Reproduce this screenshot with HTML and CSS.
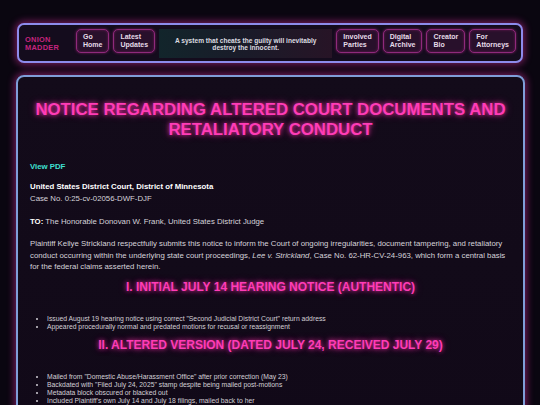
FILE: index.html
```html
<!DOCTYPE html>
<html lang="en">
<head>
<meta charset="utf-8">
<title>Onion Madder - Notice</title>
<link rel="stylesheet" href="styles.css">
</head>
<body>
<header class="topbar">
  <div class="logo">ONION<br>MADDER</div>
  <nav class="nav">
    <a class="btn" href="#">Go Home</a>
    <a class="btn" href="#">Latest Updates</a>
  </nav>
  <div class="quote">A system that cheats the guilty will inevitably destroy the innocent.</div>
  <nav class="nav">
    <a class="btn" href="#">Involved Parties</a>
    <a class="btn" href="#">Digital Archive</a>
    <a class="btn" href="#">Creator Bio</a>
    <a class="btn" href="#">For Attorneys</a>
  </nav>
</header>
<main class="card">
  <h1 class="title">NOTICE REGARDING ALTERED COURT DOCUMENTS AND RETALIATORY CONDUCT</h1>
  <p class="pdf"><a href="#">View PDF</a></p>
  <p class="court"><strong>United States District Court, District of Minnesota</strong><br>Case No. 0:25-cv-02056-DWF-DJF</p>
  <p class="to"><strong>TO:</strong> The Honorable Donovan W. Frank, United States District Judge</p>
  <p class="para">Plaintiff Kellye Strickland respectfully submits this notice to inform the Court of ongoing irregularities, document tampering, and retaliatory conduct occurring within the underlying state court proceedings, <em>Lee v. Strickland</em>, Case No. 62-HR-CV-24-963, which form a central basis for the federal claims asserted herein.</p>
  <h2 class="section">I. INITIAL JULY 14 HEARING NOTICE (AUTHENTIC)</h2>
  <ul class="list">
    <li>Issued August 19 hearing notice using correct "Second Judicial District Court" return address</li>
    <li>Appeared procedurally normal and predated motions for recusal or reassignment</li>
  </ul>
  <h2 class="section">II. ALTERED VERSION (DATED JULY 24, RECEIVED JULY 29)</h2>
  <ul class="list">
    <li>Mailed from "Domestic Abuse/Harassment Office" after prior correction (May 23)</li>
    <li>Backdated with "Filed July 24, 2025" stamp despite being mailed post-motions</li>
    <li>Metadata block obscured or blacked out</li>
    <li>Included Plaintiff's own July 14 and July 18 filings, mailed back to her</li>
    <li>Omitted the Plaintiff's current address and the original docket notation (July 17)</li>
    <li>Delivered without any judicial signature or certificate of service</li>
  </ul>
</main>
</body>
</html>
```

FILE: styles.css
```css
* { box-sizing: border-box; }

html, body {
  margin: 0;
  padding: 0;
}

body {
  background: #0a0610;
  font-family: "Liberation Sans", Arial, sans-serif;
  color: #d6d3da;
  padding-top: 23px;
}

.topbar {
  margin: 0 17px 0 17px;
  display: flex;
  align-items: flex-start;
  gap: 4px;
  padding: 4px 5px 3px 6px;
  border: 2px solid #8d8cec;
  border-radius: 7px;
  background: #140c1d;
  box-shadow: 0 0 7px 2px rgba(230, 50, 170, 0.45);
}

.logo {
  align-self: center;
  width: 36px;
  margin-right: 11px;
  color: #c4247f;
  font-weight: bold;
  font-size: 7.4px;
  line-height: 8px;
  letter-spacing: 0.3px;
}

.nav {
  display: flex;
  gap: 4px;
}

.btn {
  display: block;
  width: min-content;
  padding: 3px 6px;
  border: 1px solid #8f2a7c;
  border-radius: 5px;
  background: #28102b;
  box-shadow: 0 0 3px rgba(220, 40, 160, 0.5), inset 0 0 3px rgba(220, 40, 160, 0.35);
  color: #e6dbe8;
  font-weight: bold;
  font-size: 7px;
  line-height: 8px;
  text-decoration: none;
}

.quote {
  flex: 1;
  align-self: stretch;
  display: flex;
  align-items: center;
  justify-content: center;
  text-align: center;
  padding: 7px 14px;
  background: linear-gradient(90deg, #12252b 0%, #1a1b29 50%, #271426 100%);
  color: #dcdce0;
  font-weight: bold;
  font-size: 6.6px;
  line-height: 7px;
  min-height: 29px;
}

.card {
  margin: 12px 15px 0 16px;
  padding: 12px 12px 20px 12px;
  border: 2px solid #7f9ed8;
  border-radius: 8px;
  background: linear-gradient(180deg, #130b1a 0%, #110918 100%);
  box-shadow: 0 0 7px 2px rgba(230, 50, 170, 0.45);
  font-size: 7.8px;
  line-height: 12px;
}

.title {
  margin: 11px 0 21px;
  text-align: center;
  color: #ff3cb6;
  font-size: 16.8px;
  line-height: 20px;
  font-weight: bold;
  text-shadow: 0 0 4px rgba(255, 50, 175, 0.85), 0 0 9px rgba(255, 50, 175, 0.45);
}

.card p {
  margin: 0;
}

.pdf a {
  color: #3fe0d2;
  font-weight: bold;
  text-decoration: none;
}

.court {
  margin-top: 8px !important;
}

.court strong, .to strong {
  color: #ffffff;
}

.to {
  margin-top: 11px !important;
}

.para {
  margin-top: 10px !important;
  line-height: 11.6px;
}

.section {
  margin: 7px 0 21px;
  text-align: center;
  color: #ff3cb6;
  font-size: 12px;
  line-height: normal;
  font-weight: bold;
  text-shadow: 0 0 4px rgba(255, 50, 175, 0.85), 0 0 8px rgba(255, 50, 175, 0.4);
}

.list {
  margin: 0;
  padding-left: 17px;
  font-size: 6.8px;
  line-height: 8px;
  color: #d2cfd6;
}
```
